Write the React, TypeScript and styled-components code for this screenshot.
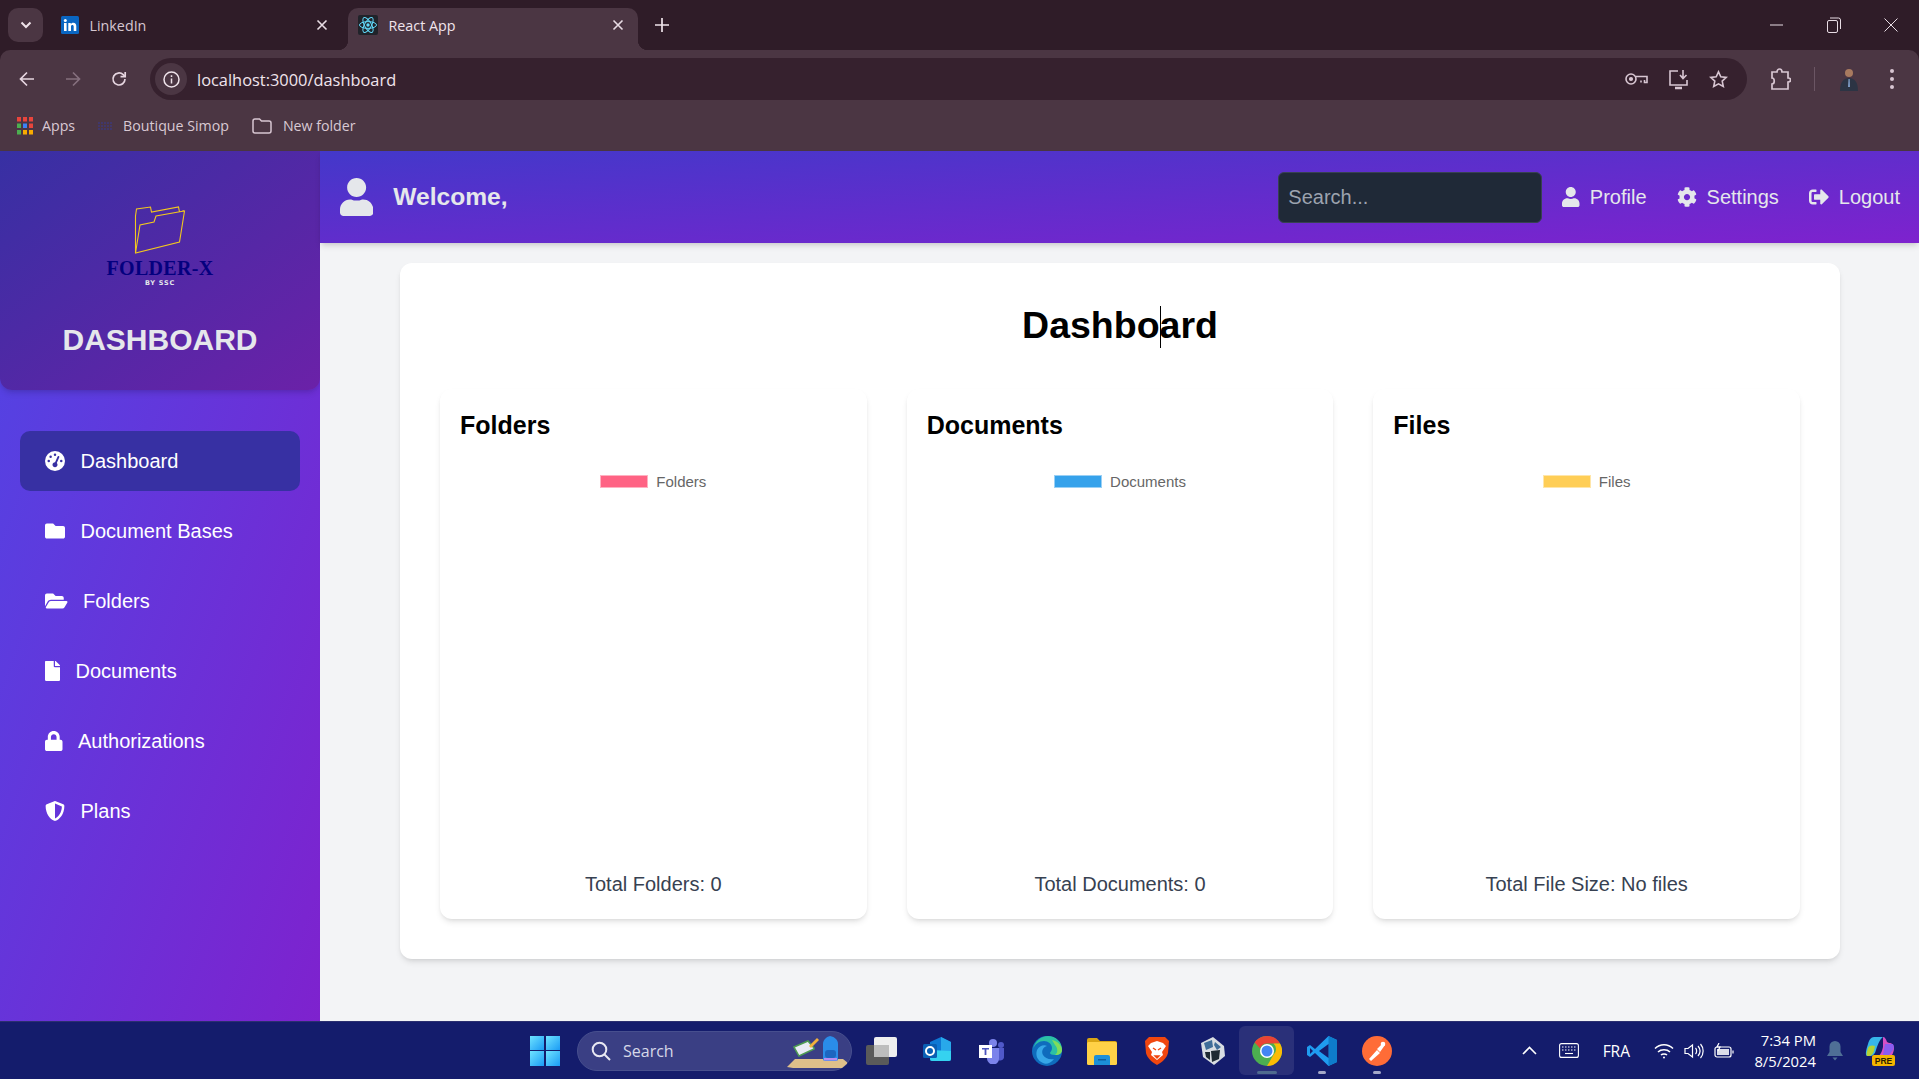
import React from 'react';
import styled, { createGlobalStyle } from 'styled-components';
import { FaUser, FaCog, FaSignOutAlt, FaFolder, FaFolderOpen, FaFile, FaLock, FaShieldAlt } from 'react-icons/fa';
import { FaGaugeHigh } from 'react-icons/fa6';

const GlobalStyle = createGlobalStyle`
  html, body { margin: 0; padding: 0; height: 100%; overflow: hidden; }
  body { font-family: "Liberation Sans", Arial, sans-serif; background: #f3f4f6; }
  * { box-sizing: border-box; }
`;

const Screen = styled.div`
  width: 1919px;
  height: 1079px;
  display: flex;
  flex-direction: column;
  overflow: hidden;
  background: #2f1c28;
`;

/* browser chrome */
const TabStrip = styled.div`
  height: 50px;
  background: #2f1c28;
  display: flex;
  align-items: flex-end;
  padding-left: 8px;
  font-family: "Open Sans", sans-serif;
  font-size: 14.3px;
`;

const TabMenu = styled.div`
  width: 35px;
  height: 34px;
  margin-bottom: 8px;
  border-radius: 10px;
  background: #4b3643;
  display: flex;
  align-items: center;
  justify-content: center;
`;

const Tab = styled.div<{ $active?: boolean }>`
  position: relative;
  width: ${p => (p.$active ? '290px' : '300px')};
  height: 42px;
  margin-left: ${p => (p.$active ? '5px' : '0')};
  padding: 0 ${p => (p.$active ? '14px' : '15px')} 8px ${p => (p.$active ? '10px' : '18px')};
  display: flex;
  align-items: center;
  gap: 10.5px;
  border-radius: 10px 10px 0 0;
  background: ${p => (p.$active ? '#4b3643' : 'transparent')};
  color: ${p => (p.$active ? '#f0e4ec' : '#d6c6d0')};
  ${p => p.$active && `
    &::before {
      content: '';
      position: absolute;
      left: -10px;
      bottom: 0;
      width: 10px;
      height: 10px;
      background: radial-gradient(circle at 0 0, #2f1c28 10px, #4b3643 10.5px);
    }
    &::after {
      content: '';
      position: absolute;
      right: -10px;
      bottom: 0;
      width: 10px;
      height: 10px;
      background: radial-gradient(circle at 100% 0, #2f1c28 10px, #4b3643 10.5px);
    }
  `}
`;

const TabTitle = styled.span`
  flex: 1;
`;

const NewTab = styled.div`
  width: 24px;
  height: 42px;
  margin-left: 12px;
  padding-bottom: 8px;
  display: flex;
  align-items: center;
  justify-content: center;
`;

const WindowControls = styled.div`
  margin-left: auto;
  height: 50px;
  padding-right: 21px;
  display: flex;
  align-items: center;
  gap: 43px;
`;

const Toolbar = styled.div`
  height: 50px;
  background: #4b3643;
  border-radius: 10px 10px 0 0;
  display: flex;
  align-items: center;
  padding: 8px 0 0 4px;
`;

const NavButton = styled.div`
  width: 46px;
  display: flex;
  justify-content: center;
`;

const UrlBar = styled.div`
  width: 1597px;
  height: 42px;
  margin-left: 8px;
  border-radius: 21px;
  background: #36212e;
  display: flex;
  align-items: center;
  padding: 0 19px 0 5px;
  gap: 20px;
`;

const SiteInfo = styled.div`
  width: 32px;
  height: 32px;
  border-radius: 50%;
  background: #4b3643;
  display: flex;
  align-items: center;
  justify-content: center;
`;

const UrlText = styled.div`
  flex: 1;
  margin-left: -10px;
  font-family: "Open Sans", sans-serif;
  font-size: 16.4px;
  color: #f0e4ec;
`;

const ToolbarEnd = styled.div`
  flex: 1;
  display: flex;
  align-items: center;
  padding-left: 24px;
`;

const Separator = styled.div`
  width: 1px;
  height: 24px;
  margin: 0 25px 0 23px;
  background: #6b5664;
`;

const MoreDots = styled.svg`
  margin-left: 32px;
`;

const BookmarkBar = styled.div`
  height: 51px;
  background: #4b3643;
  display: flex;
  align-items: center;
  padding-left: 17px;
  font-family: "Open Sans", sans-serif;
  font-size: 14.2px;
  color: #d9c9d3;
`;

const Bookmark = styled.div<{ $gap?: number }>`
  display: flex;
  align-items: center;
  gap: ${p => p.$gap ?? 9}px;
  margin-right: 23px;
`;

/* app */
const AppFrame = styled.div`
  flex: 1;
  min-height: 0;
  display: flex;
`;

const Sidebar = styled.aside`
  width: 320px;
  flex-shrink: 0;
  background: linear-gradient(to bottom right, #4f46e5, #7e22ce);
  color: #fff;
`;

const Brand = styled.div`
  height: 239px;
  border-radius: 0 0 12px 12px;
  background: linear-gradient(to bottom right, #3730a3, #6b21a8);
  box-shadow: 0 4px 6px -1px rgba(0, 0, 0, 0.12), 0 2px 4px -2px rgba(0, 0, 0, 0.1);
  display: flex;
  flex-direction: column;
  align-items: center;
  padding-top: 55px;
`;

const LogoWordmark = styled.div`
  margin-top: 3px;
  font-family: "Liberation Serif", serif;
  font-weight: 700;
  font-size: 20px;
  line-height: 19px;
  letter-spacing: 0.3px;
  color: #04007f;
`;

const LogoTag = styled.div`
  margin-top: 1px;
  font-family: "DejaVu Sans", sans-serif;
  font-weight: 700;
  font-size: 6.5px;
  line-height: 8px;
  letter-spacing: 0.8px;
  color: #e5e7eb;
`;

const BrandTitle = styled.h2`
  margin: 35px 0 0;
  font-size: 30px;
  line-height: 36px;
  font-weight: 700;
  color: #e5e7eb;
`;

const SideNav = styled.nav`
  display: flex;
  flex-direction: column;
  gap: 10px;
  padding: 41px 20px 0;
`;

const SideItem = styled.a<{ $active?: boolean; $iconWidth: number }>`
  height: 60px;
  padding-left: 25px;
  border-radius: 10px;
  display: flex;
  align-items: center;
  gap: 15.5px;
  font-size: 20px;
  color: #fff;
  background: ${p => (p.$active ? '#3730a3' : 'transparent')};
  svg { flex-shrink: 0; width: ${p => p.$iconWidth}px; height: 20px; }
`;

const Main = styled.div`
  flex: 1;
  min-width: 0;
  display: flex;
  flex-direction: column;
`;

const Header = styled.header`
  position: relative;
  height: 92px;
  padding: 0 19px 0 20px;
  display: flex;
  align-items: center;
  color: #e5e7eb;
  background: linear-gradient(to bottom right, #4338ca, #7e22ce);
  box-shadow: 0 4px 6px -1px rgba(0, 0, 0, 0.12), 0 2px 4px -2px rgba(0, 0, 0, 0.1);
`;

const UserAvatar = styled(FaUser)`
  width: 33.25px;
  height: 38px;
`;

const Welcome = styled.div`
  font-size: 24.6px;
  font-weight: 700;
  margin-left: 20px;
`;

const HeaderRight = styled.div`
  margin-left: auto;
  display: flex;
  align-items: center;
  gap: 30px;
`;

const SearchInput = styled.input`
  width: 264px;
  height: 51px;
  margin-right: -10px;
  padding: 0 9px;
  border: 1px solid #374151;
  border-radius: 6px;
  background: #1f2937;
  color: #fff;
  font-family: "Liberation Sans", Arial, sans-serif;
  font-size: 20px;
  &::placeholder { color: #9ca3af; opacity: 1; }
`;

const HeaderLink = styled.a<{ $iconWidth: number }>`
  display: flex;
  align-items: center;
  gap: 10px;
  font-size: 20px;
  color: #e5e7eb;
  svg { width: ${p => p.$iconWidth}px; height: 20px; }
`;

const Content = styled.main`
  flex: 1;
  padding: 20px 0 0 1px;
  background: #f3f4f6;
`;

const Panel = styled.section`
  width: 1440px;
  height: 696px;
  margin: 0 auto;
  padding: 40px;
  border-radius: 12px;
  background: #fff;
  box-shadow: 0 4px 6px -1px rgba(0, 0, 0, 0.1), 0 2px 4px -2px rgba(0, 0, 0, 0.1);
  display: flex;
  flex-direction: column;
`;

const PageTitle = styled.h1`
  margin: 0 0 40px;
  height: 46px;
  line-height: 45px;
  text-align: center;
  font-size: 37.5px;
  font-weight: 700;
  color: #000;
`;

const Caret = styled.span`
  display: inline-block;
  width: 1px;
  height: 42px;
  margin-right: -1px;
  vertical-align: -10px;
  background: #000;
`;

const CardGrid = styled.div`
  flex: 1;
  display: grid;
  grid-template-columns: repeat(3, 1fr);
  gap: 40px;
`;

const Card = styled.article`
  padding: 20px;
  border-radius: 12px;
  background: #fff;
  box-shadow: 0 4px 6px -1px rgba(0, 0, 0, 0.1), 0 2px 4px -2px rgba(0, 0, 0, 0.1);
  display: flex;
  flex-direction: column;
`;

const CardTitle = styled.h3`
  margin: 0;
  font-size: 25px;
  line-height: 32px;
  font-weight: 700;
  color: #000;
`;

const Legend = styled.div`
  margin-top: 31px;
  height: 18px;
  display: flex;
  align-items: center;
  justify-content: center;
  gap: 8px;
  font-size: 15px;
  color: #666;
`;

const LegendSwatch = styled.span<{ $color: string; $border: string }>`
  width: 48px;
  height: 13px;
  background: ${p => p.$color};
  border: 1px solid ${p => p.$border};
`;

const CardTotal = styled.div`
  margin-top: auto;
  line-height: 30px;
  text-align: center;
  font-size: 20px;
  color: #374151;
`;

/* taskbar */
const Taskbar = styled.footer`
  height: 58px;
  flex-shrink: 0;
  background: #141c6c;
  border-top: 1px solid #2b2f70;
  display: flex;
  align-items: center;
  padding-left: 530px;
  color: #fff;
  font-family: "Open Sans", sans-serif;
`;

const StartIcon = styled.div`
  width: 30px;
  height: 30px;
  display: grid;
  grid-template-columns: 1fr 1fr;
  gap: 1.5px;
`;

const StartPane = styled.span`
  background: linear-gradient(135deg, #6fe3ff, #1a9bf5);
`;

const TaskSearch = styled.div`
  position: relative;
  width: 275px;
  height: 40px;
  margin: 0 2px 0 17px;
  padding-left: 13px;
  border-radius: 20px;
  border: 1px solid #474f8e;
  background: #3a3f84;
  display: flex;
  align-items: center;
  gap: 12px;
  font-size: 16px;
  color: #d6d8e8;
`;

const SearchArt = styled.div`
  position: absolute;
  right: 4px;
  bottom: 2px;
  display: flex;
`;

const TaskApps = styled.div`
  display: flex;
  align-items: center;
`;

const TaskApp = styled.div<{ $hover?: boolean; $dot?: 'wide' | 'small' }>`
  position: relative;
  width: 55px;
  height: 49px;
  display: flex;
  align-items: center;
  justify-content: center;
  border-radius: 6px;
  background: ${p => (p.$hover ? '#2a3079' : 'transparent')};
  &::after {
    content: '';
    display: ${p => (p.$dot ? 'block' : 'none')};
    position: absolute;
    bottom: 1px;
    left: 50%;
    transform: translateX(-50%);
    width: ${p => (p.$dot === 'wide' ? '20px' : '8px')};
    height: 3px;
    border-radius: 2px;
    background: ${p => (p.$dot === 'wide' ? '#4f6a8f' : '#a4a8c8')};
  }
`;

const Tray = styled.div`
  margin-left: auto;
  padding-right: 24px;
  display: flex;
  align-items: center;
`;

const TrayChevron = styled.svg`
  margin-right: 22px;
`;

const TrayText = styled.div`
  font-size: 15.5px;
  margin: 0 24px;
`;

const TrayClock = styled.div`
  margin: 0 11px 0 6px;
  width: 76px;
  text-align: right;
  white-space: nowrap;
  font-size: 14.8px;
  line-height: 21px;
`;

const TrayIcons = styled.div`
  display: flex;
  align-items: center;
  gap: 10px;
`;

const CopilotSlot = styled.div`
  margin-left: 22px;
  display: flex;
`;

const navItems = [
  { label: 'Dashboard', icon: <FaGaugeHigh />, iconWidth: 20, active: true },
  { label: 'Document Bases', icon: <FaFolder />, iconWidth: 20 },
  { label: 'Folders', icon: <FaFolderOpen />, iconWidth: 22.5 },
  { label: 'Documents', icon: <FaFile />, iconWidth: 15 },
  { label: 'Authorizations', icon: <FaLock />, iconWidth: 17.5 },
  { label: 'Plans', icon: <FaShieldAlt />, iconWidth: 20 },
];

const charts = [
  { title: 'Folders', color: '#ff6384', border: '#ffb1c1', total: 'Total Folders: 0' },
  { title: 'Documents', color: '#36a2eb', border: '#9ad0f5', total: 'Total Documents: 0' },
  { title: 'Files', color: '#ffce56', border: '#ffe6aa', total: 'Total File Size: No files' },
];

const stroke = '#d8c6d2';

const ReactFavicon = () => (
  <svg width="20" height="20" viewBox="0 0 20 20">
    <rect width="20" height="20" rx="2" fill="#20232a" />
    <g fill="none" stroke="#61dafb" strokeWidth="1">
      <ellipse cx="10" cy="10" rx="8.5" ry="3.4" />
      <ellipse cx="10" cy="10" rx="8.5" ry="3.4" transform="rotate(60 10 10)" />
      <ellipse cx="10" cy="10" rx="8.5" ry="3.4" transform="rotate(120 10 10)" />
    </g>
    <circle cx="10" cy="10" r="1.7" fill="#61dafb" />
  </svg>
);

const LinkedInFavicon = () => (
  <svg width="18" height="18" viewBox="0 0 18 18">
    <rect width="18" height="18" rx="1.5" fill="#0a66c2" />
    <rect x="3" y="7" width="2.6" height="8" fill="#fff" />
    <circle cx="4.3" cy="4.5" r="1.5" fill="#fff" />
    <path d="M7.3 7h2.5v1.2c.5-.8 1.3-1.4 2.5-1.4 2 0 3 1.2 3 3.4V15h-2.6v-4.2c0-1-.4-1.7-1.3-1.7s-1.4.7-1.4 1.7V15H7.3z" fill="#fff" />
  </svg>
);

const CloseX = () => (
  <svg width="12" height="12" viewBox="0 0 12 12">
    <path d="M1.5 1.5l9 9M10.5 1.5l-9 9" stroke="#e8dce4" strokeWidth="1.6" />
  </svg>
);

const FolderLogo = () => (
  <svg width="52" height="50" viewBox="0 0 52 50" fill="none" stroke="#f2c81e" strokeWidth="1.1">
    <path d="M1.5 10v37l44-11 5-31-2-.2" />
    <path d="M1.5 47L6 19l14-3 2-6 28-5" />
    <path d="M1.5 10l1-7 14-2 1 5 27-5 1 5" />
  </svg>
);

const AppsGrid = () => (
  <svg width="16" height="18" viewBox="0 0 16 18">
    {[
      '#e8453c', '#e8453c', '#e8453c',
      '#4caf50', '#3b82f6', '#e8453c',
      '#4caf50', '#f9ab00', '#f9ab00',
    ].map((c, i) => (
      <rect key={i} x={(i % 3) * 6} y={Math.floor(i / 3) * 6.5} width="4" height="4.5" fill={c} />
    ))}
  </svg>
);

const FolderOutline = () => (
  <svg width="20" height="16" viewBox="0 0 20 16" fill="none" stroke={stroke} strokeWidth="1.5">
    <path d="M1 3a2 2 0 0 1 2-2h4.5l2 2H17a2 2 0 0 1 2 2v8a2 2 0 0 1-2 2H3a2 2 0 0 1-2-2z" />
  </svg>
);

const SimopLogo = () => (
  <svg width="16" height="12" viewBox="0 0 16 12" fill="none" stroke="#3b3a86" strokeWidth="1.2">
    <path d="M1 2v8M4 2v8M7 2v8M10 2v8M13 2v8" strokeDasharray="2 1" />
  </svg>
);

const Outlook = () => (
  <svg width="30" height="30" viewBox="0 0 30 30">
    <path d="M8 6l11-5 10 5v17a2 2 0 0 1-2 2H10a2 2 0 0 1-2-2z" fill="#0f78d4" />
    <path d="M19 1l10 5v9H19z" fill="#28a8ea" />
    <path d="M8 14l21 1v8a2 2 0 0 1-2 2H10a2 2 0 0 1-2-2z" fill="#35d2f0" />
    <rect x="1" y="8" width="14" height="14" rx="1.5" fill="#0a5fb4" />
    <circle cx="8" cy="15" r="4" fill="none" stroke="#fff" strokeWidth="2" />
  </svg>
);

const TaskView = () => (
  <svg width="31" height="28" viewBox="0 0 31 28">
    <rect x="0" y="8" width="23" height="20" rx="2" fill="#5a5a5a" />
    <rect x="8" y="0" width="23" height="20" rx="2" fill="#efefef" />
    <rect x="8" y="8" width="15" height="12" fill="#bdbdbd" />
  </svg>
);

const Teams = () => (
  <svg width="26" height="26" viewBox="0 0 26 26">
    <circle cx="14" cy="5" r="4" fill="#7b83eb" />
    <circle cx="22" cy="7" r="3" fill="#5059c9" />
    <path d="M16 10h9v8a4 4 0 0 1-8 1z" fill="#5059c9" />
    <path d="M7 10h13v10a6 6 0 0 1-12 1z" fill="#7b83eb" />
    <rect x="0" y="7" width="13" height="13" fill="#fff" />
    <path d="M3 10h7v1.6H7.4V17H5.6v-5.4H3z" fill="#4b53bc" />
  </svg>
);

const Edge = () => (
  <svg width="30" height="30" viewBox="0 0 30 30">
    <circle cx="15" cy="15" r="15" fill="#0f6cbd" />
    <path d="M1 13C3 5 9 0 16 0c8 0 14 6 14 13 0 4-3 6-7 6-3 0-5-1-5-2 0-1 2-2 2-5 0-4-4-7-8-7C7 5 3 8 1 13z" fill="#2cc0a5" />
    <path d="M20 4c5 1 10 5 10 10 0 3-2 5-7 5 3-2 3-7 0-10z" fill="#7fdc5c" />
    <path d="M11 27c-5-2-8-7-6-13 2-4 7-6 10-4-4 1-6 5-4 9 2 3 6 5 11 4-3 4-8 6-11 4z" fill="#37a7e8" />
  </svg>
);

const Explorer = () => (
  <svg width="30" height="28" viewBox="0 0 30 28">
    <path d="M0 3a2 2 0 0 1 2-2h8l3 3h15a2 2 0 0 1 2 2v6H0z" fill="#d9a514" />
    <rect y="5" width="30" height="23" rx="1.5" fill="#ffd147" />
    <path d="M9 18h12a2 2 0 0 1 2 2v8H7v-8a2 2 0 0 1 2-2z" fill="#1c8fd8" />
    <rect x="11" y="22" width="8" height="1.5" fill="#0d5fa0" />
  </svg>
);

const Brave = () => (
  <svg width="26" height="30" viewBox="0 0 26 30">
    <path d="M5 1h16l4 4-1 12c-1 5-7 10-11 12C9 27 3 22 2 17L1 5z" fill="#f1470f" />
    <path d="M7 7l6-2 6 2 3 3-4 6 1 3-6 5-6-5 1-3-4-6z" fill="#fff" />
    <path d="M9 12l3 2M17 12l-3 2M11 20h4l-2 2z" stroke="#f1470f" strokeWidth="1.4" fill="#f1470f" />
  </svg>
);

const Cube = () => (
  <svg width="26" height="28" viewBox="0 0 26 28">
    <path d="M2 6l12-6 11 9 1 10-11 9L4 20z" fill="#d8dde2" />
    <path d="M5 6l8-3 1 7-7 3zM16 5l6 5-4 3-3-5z" fill="#3f6d99" />
    <path d="M12 14l9-1-1 9-7 3zM6 15l5 0 0 8-4-3z" fill="#1e2a33" />
  </svg>
);

const Chrome = () => (
  <svg width="30" height="30" viewBox="0 0 30 30">
    <circle cx="15" cy="15" r="15" fill="#4caf50" />
    <path d="M15 0a15 15 0 0 1 13 7.5H15a7.5 7.5 0 0 0-7 4.8L2.6 6.5A15 15 0 0 1 15 0z" fill="#ea4335" />
    <path d="M28 7.5A15 15 0 0 1 15 30l6.5-11.2a7.5 7.5 0 0 0 0-11.3z" fill="#fbbc04" />
    <circle cx="15" cy="15" r="7" fill="#fff" />
    <circle cx="15" cy="15" r="5.5" fill="#4285f4" />
  </svg>
);

const VSCode = () => (
  <svg width="30" height="30" viewBox="0 0 30 30">
    <path d="M21.5 0L30 4v22l-8.5 4L8 17l-5 4-3-2V11l3-2 5 4z" fill="#1f9cf0" />
    <path d="M21.5 0L30 4v22l-8.5 4z" fill="#0e7ccb" />
    <path d="M21.5 8L12 15l9.5 7z" fill="#141c6c" />
    <path d="M3 12v6l3-3z" fill="#141c6c" />
  </svg>
);

const Postman = () => (
  <svg width="30" height="30" viewBox="0 0 30 30">
    <circle cx="15" cy="15" r="15" fill="#ff6c37" />
    <path d="M7 23l8-9 3 3-9 8zM15 13l6-6 2 2-5 7z" fill="#fff" />
    <circle cx="21" cy="8" r="2.3" fill="#fff" />
  </svg>
);

const SearchArtwork = () => (
  <svg width="60" height="34" viewBox="0 0 60 34">
    <path d="M0 33l8-8h48l5 4-6 5H6z" fill="#dfc08a" />
    <path d="M7 13l14-6 6 7v1l-15 7z" fill="#e9ecf6" stroke="#4d9c52" strokeWidth="1.5" />
    <path d="M22 12l8-8 2 2-8 8z" fill="#f2b13c" />
    <path d="M36 25V10c0-4 3-7 7-8 5 1 8 4 8 8v15a2 2 0 0 1-2 2H38a2 2 0 0 1-2-2z" fill="#2a8ce8" />
    <rect x="38" y="16" width="11" height="8" rx="3" fill="#1d66c0" />
    <rect x="37" y="24" width="13" height="2.5" fill="#b98cf0" />
  </svg>
);

const Copilot = () => (
  <svg width="30" height="32" viewBox="0 0 30 32">
    <path d="M9 2h9c-3 2-5 7-7 13-1 4-3 6-6 6H2C0 20 1 15 3 9c1-4 3-7 6-7z" fill="#37b6e9" />
    <path d="M3 13c1-3 5-3 7-2l-1 5c-1 3-3 5-5 5H2c-1-2 0-5 1-8z" fill="#b5d334" />
    <path d="M18 2c2 0 3 2 4 5l2 1c3 0 5 2 5 5 0 4-2 8-4 9H12c4-2 5-6 6-10z" fill="#d64fc6" />
    <path d="M20 9h8c1 2 1 4 0 6l-4 5h-6z" fill="#8a5cf0" />
    <rect x="7" y="20" width="23" height="11" rx="2" fill="#f4b400" />
    <text x="18.5" y="29" textAnchor="middle" fontSize="8.5" fontWeight="700" fontFamily="Liberation Sans" fill="#2a1c00">PRE</text>
  </svg>
);

export default function App() {
  return (
    <>
      <GlobalStyle />
      <Screen>
        <TabStrip>
          <TabMenu>
            <svg width="12" height="8" viewBox="0 0 12 8"><path d="M1.5 1.5L6 6l4.5-4.5" fill="none" stroke="#efe3ea" strokeWidth="2" /></svg>
          </TabMenu>
          <Tab>
            <LinkedInFavicon />
            <TabTitle>LinkedIn</TabTitle>
            <CloseX />
          </Tab>
          <Tab $active>
            <ReactFavicon />
            <TabTitle>React App</TabTitle>
            <CloseX />
          </Tab>
          <NewTab>
            <svg width="14" height="14" viewBox="0 0 14 14"><path d="M7 0v14M0 7h14" stroke="#efe3ea" strokeWidth="1.7" /></svg>
          </NewTab>
          <WindowControls>
            <svg width="14" height="14" viewBox="0 0 14 14"><path d="M0 7h13" stroke="#e8dce4" strokeWidth="1" /></svg>
            <svg width="14" height="16" viewBox="0 0 14 16" fill="none" stroke="#e8dce4" strokeWidth="1"><rect x="0.5" y="3.5" width="10" height="12" rx="1.5" /><path d="M3 1h8.5a2 2 0 0 1 2 2v9" /></svg>
            <svg width="14" height="14" viewBox="0 0 14 14"><path d="M.5.5l13 13M13.5.5l-13 13" stroke="#e8dce4" strokeWidth="1" /></svg>
          </WindowControls>
        </TabStrip>

        <Toolbar>
          <NavButton>
            <svg width="16" height="16" viewBox="0 0 16 16" fill="none" stroke="#e6d6e0" strokeWidth="1.7"><path d="M15 8H2M8 1.5L1.5 8 8 14.5" /></svg>
          </NavButton>
          <NavButton>
            <svg width="16" height="16" viewBox="0 0 16 16" fill="none" stroke="#85707e" strokeWidth="1.7"><path d="M1 8h13M8 1.5L14.5 8 8 14.5" /></svg>
          </NavButton>
          <NavButton>
            <svg width="16" height="16" viewBox="0 0 16 16" fill="none" stroke="#e6d6e0" strokeWidth="1.7"><path d="M14 8a6 6 0 1 1-1.8-4.3L14 5.5" /><path d="M14.2 1v4.7H9.5" /></svg>
          </NavButton>
          <UrlBar>
            <SiteInfo>
              <svg width="17" height="17" viewBox="0 0 17 17" fill="none" stroke="#efe3ea" strokeWidth="1.5"><circle cx="8.5" cy="8.5" r="7.5" /><path d="M8.5 7.5v5M8.5 4.3v1.6" /></svg>
            </SiteInfo>
            <UrlText>localhost:3000/dashboard</UrlText>
            <svg width="23" height="14" viewBox="0 0 23 14" fill="none" stroke={stroke} strokeWidth="1.6"><circle cx="6" cy="7" r="5" /><circle cx="6" cy="7" r="1.3" fill={stroke} /><path d="M11 4.5h11v6h-2.5V8M16 8.5v2" /></svg>
            <svg width="21" height="21" viewBox="0 0 21 21" fill="none" stroke={stroke} strokeWidth="1.6"><path d="M10 2H2v14h17v-5" /><path d="M15 1v8M12 6l3 3.5L18.5 6" /><path d="M7 19h7" strokeWidth="2.5" /></svg>
            <svg width="19" height="19" viewBox="0 0 19 19" fill="none" stroke={stroke} strokeWidth="1.6"><path d="M9.5 1.8l2.3 5 5.4.6-4 3.7 1.1 5.4-4.8-2.7-4.8 2.7 1.1-5.4-4-3.7 5.4-.6z" /></svg>
          </UrlBar>
          <ToolbarEnd>
            <svg width="20" height="23" viewBox="0 0 20 23" fill="none" stroke={stroke} strokeWidth="1.7"><path d="M1 4h5c0-4 5-4 5 0h6v6c3.5 0 3.5 4 0 4v7H1v-5c3 0 3-6 0-6z" /></svg>
            <Separator />
            <svg width="18" height="24" viewBox="0 0 18 24"><circle cx="9" cy="6" r="4" fill="#a87a5f" /><path d="M0 24c0-8 3-13 9-13s9 5 9 13z" fill="#2c3444" /><path d="M8.5 12h1.2l.3 8H8z" fill="#7e9cc4" /></svg>
            <MoreDots width="4" height="20" viewBox="0 0 4 20"><circle cx="2" cy="2" r="2" fill={stroke} /><circle cx="2" cy="10" r="2" fill={stroke} /><circle cx="2" cy="18" r="2" fill={stroke} /></MoreDots>
          </ToolbarEnd>
        </Toolbar>

        <BookmarkBar>
          <Bookmark><AppsGrid />Apps</Bookmark>
          <Bookmark><SimopLogo />Boutique Simop</Bookmark>
          <Bookmark $gap={11}><FolderOutline />New folder</Bookmark>
        </BookmarkBar>

        <AppFrame>
          <Sidebar>
            <Brand>
              <FolderLogo />
              <LogoWordmark>FOLDER-X</LogoWordmark>
              <LogoTag>BY SSC</LogoTag>
              <BrandTitle>DASHBOARD</BrandTitle>
            </Brand>
            <SideNav>
              {navItems.map(item => (
                <SideItem key={item.label} $active={item.active} $iconWidth={item.iconWidth}>
                  {item.icon}
                  {item.label}
                </SideItem>
              ))}
            </SideNav>
          </Sidebar>

          <Main>
            <Header>
              <UserAvatar />
              <Welcome>Welcome,</Welcome>
              <HeaderRight>
                <SearchInput placeholder="Search..." readOnly />
                <HeaderLink $iconWidth={17.5}><FaUser />Profile</HeaderLink>
                <HeaderLink $iconWidth={20}><FaCog />Settings</HeaderLink>
                <HeaderLink $iconWidth={20}><FaSignOutAlt />Logout</HeaderLink>
              </HeaderRight>
            </Header>
            <Content>
              <Panel>
                <PageTitle>Dashbo<Caret />ard</PageTitle>
                <CardGrid>
                  {charts.map(chart => (
                    <Card key={chart.title}>
                      <CardTitle>{chart.title}</CardTitle>
                      <Legend>
                        <LegendSwatch $color={chart.color} $border={chart.border} />
                        {chart.title}
                      </Legend>
                      <CardTotal>{chart.total}</CardTotal>
                    </Card>
                  ))}
                </CardGrid>
              </Panel>
            </Content>
          </Main>
        </AppFrame>

        <Taskbar>
          <StartIcon>
            <StartPane /><StartPane /><StartPane /><StartPane />
          </StartIcon>
          <TaskSearch>
            <svg width="20" height="20" viewBox="0 0 20 20" fill="none" stroke="#e8e8f2" strokeWidth="2"><circle cx="8.5" cy="8.5" r="6.8" /><path d="M13.5 13.5L19 19" /></svg>
            Search
            <SearchArt><SearchArtwork /></SearchArt>
          </TaskSearch>
          <TaskApps>
            <TaskApp><TaskView /></TaskApp>
            <TaskApp><Outlook /></TaskApp>
            <TaskApp><Teams /></TaskApp>
            <TaskApp><Edge /></TaskApp>
            <TaskApp><Explorer /></TaskApp>
            <TaskApp><Brave /></TaskApp>
            <TaskApp><Cube /></TaskApp>
            <TaskApp $hover $dot="wide"><Chrome /></TaskApp>
            <TaskApp $dot="small"><VSCode /></TaskApp>
            <TaskApp $dot="small"><Postman /></TaskApp>
          </TaskApps>
          <Tray>
            <TrayChevron width="15" height="9" viewBox="0 0 15 9" fill="none" stroke="#fff" strokeWidth="1.6"><path d="M1 8l6.5-6.5L14 8" /></TrayChevron>
            <svg width="20" height="15" viewBox="0 0 20 15" fill="none" stroke="#fff" strokeWidth="1.1"><rect x="0.6" y="0.6" width="18.8" height="13.8" rx="2" /><path d="M3 4h14M3 7h14" strokeDasharray="1.5 1.5" /><path d="M6 10.5h8" /></svg>
            <TrayText>FRA</TrayText>
            <TrayIcons>
              <svg width="20" height="16" viewBox="0 0 20 16" fill="none" stroke="#fff" strokeWidth="1.5"><path d="M1 5.5c5-5 13-5 18 0M4 9c3-3 9-3 12 0M7 12c1.5-1.5 4.5-1.5 6 0" /><circle cx="10" cy="14.5" r="1" fill="#fff" stroke="none" /></svg>
              <svg width="20" height="16" viewBox="0 0 20 16" fill="none" stroke="#fff" strokeWidth="1.2"><path d="M1 5.5h3L8.5 2v12L4 10.5H1z" /><path d="M11.5 5c1.5 1.5 1.5 4.5 0 6M14 3c2.5 3 2.5 7 0 10M16.5 1c3.5 4 3.5 10 0 14" /></svg>
              <svg width="20" height="16" viewBox="0 0 20 16" fill="none" stroke="#fff" strokeWidth="1.2"><rect x="1" y="4" width="16" height="10" rx="2" /><path d="M19 7.5v3" /><path d="M3 6h12v6H3z" fill="#fff" opacity="0.85" stroke="none" /><path d="M5 0L3 4h3L4 8" /></svg>
            </TrayIcons>
            <TrayClock>7:34 PM<br />8/5/2024</TrayClock>
            <svg width="16" height="20" viewBox="0 0 16 20" fill="#4f6f96"><path d="M8 0a5.5 5.5 0 0 1 5.5 5.5V11l2.5 4H0l2.5-4V5.5A5.5 5.5 0 0 1 8 0z" /><path d="M5.5 16.5h5L8 19.5z" /></svg>
            <CopilotSlot><Copilot /></CopilotSlot>
          </Tray>
        </Taskbar>
      </Screen>
    </>
  );
}
